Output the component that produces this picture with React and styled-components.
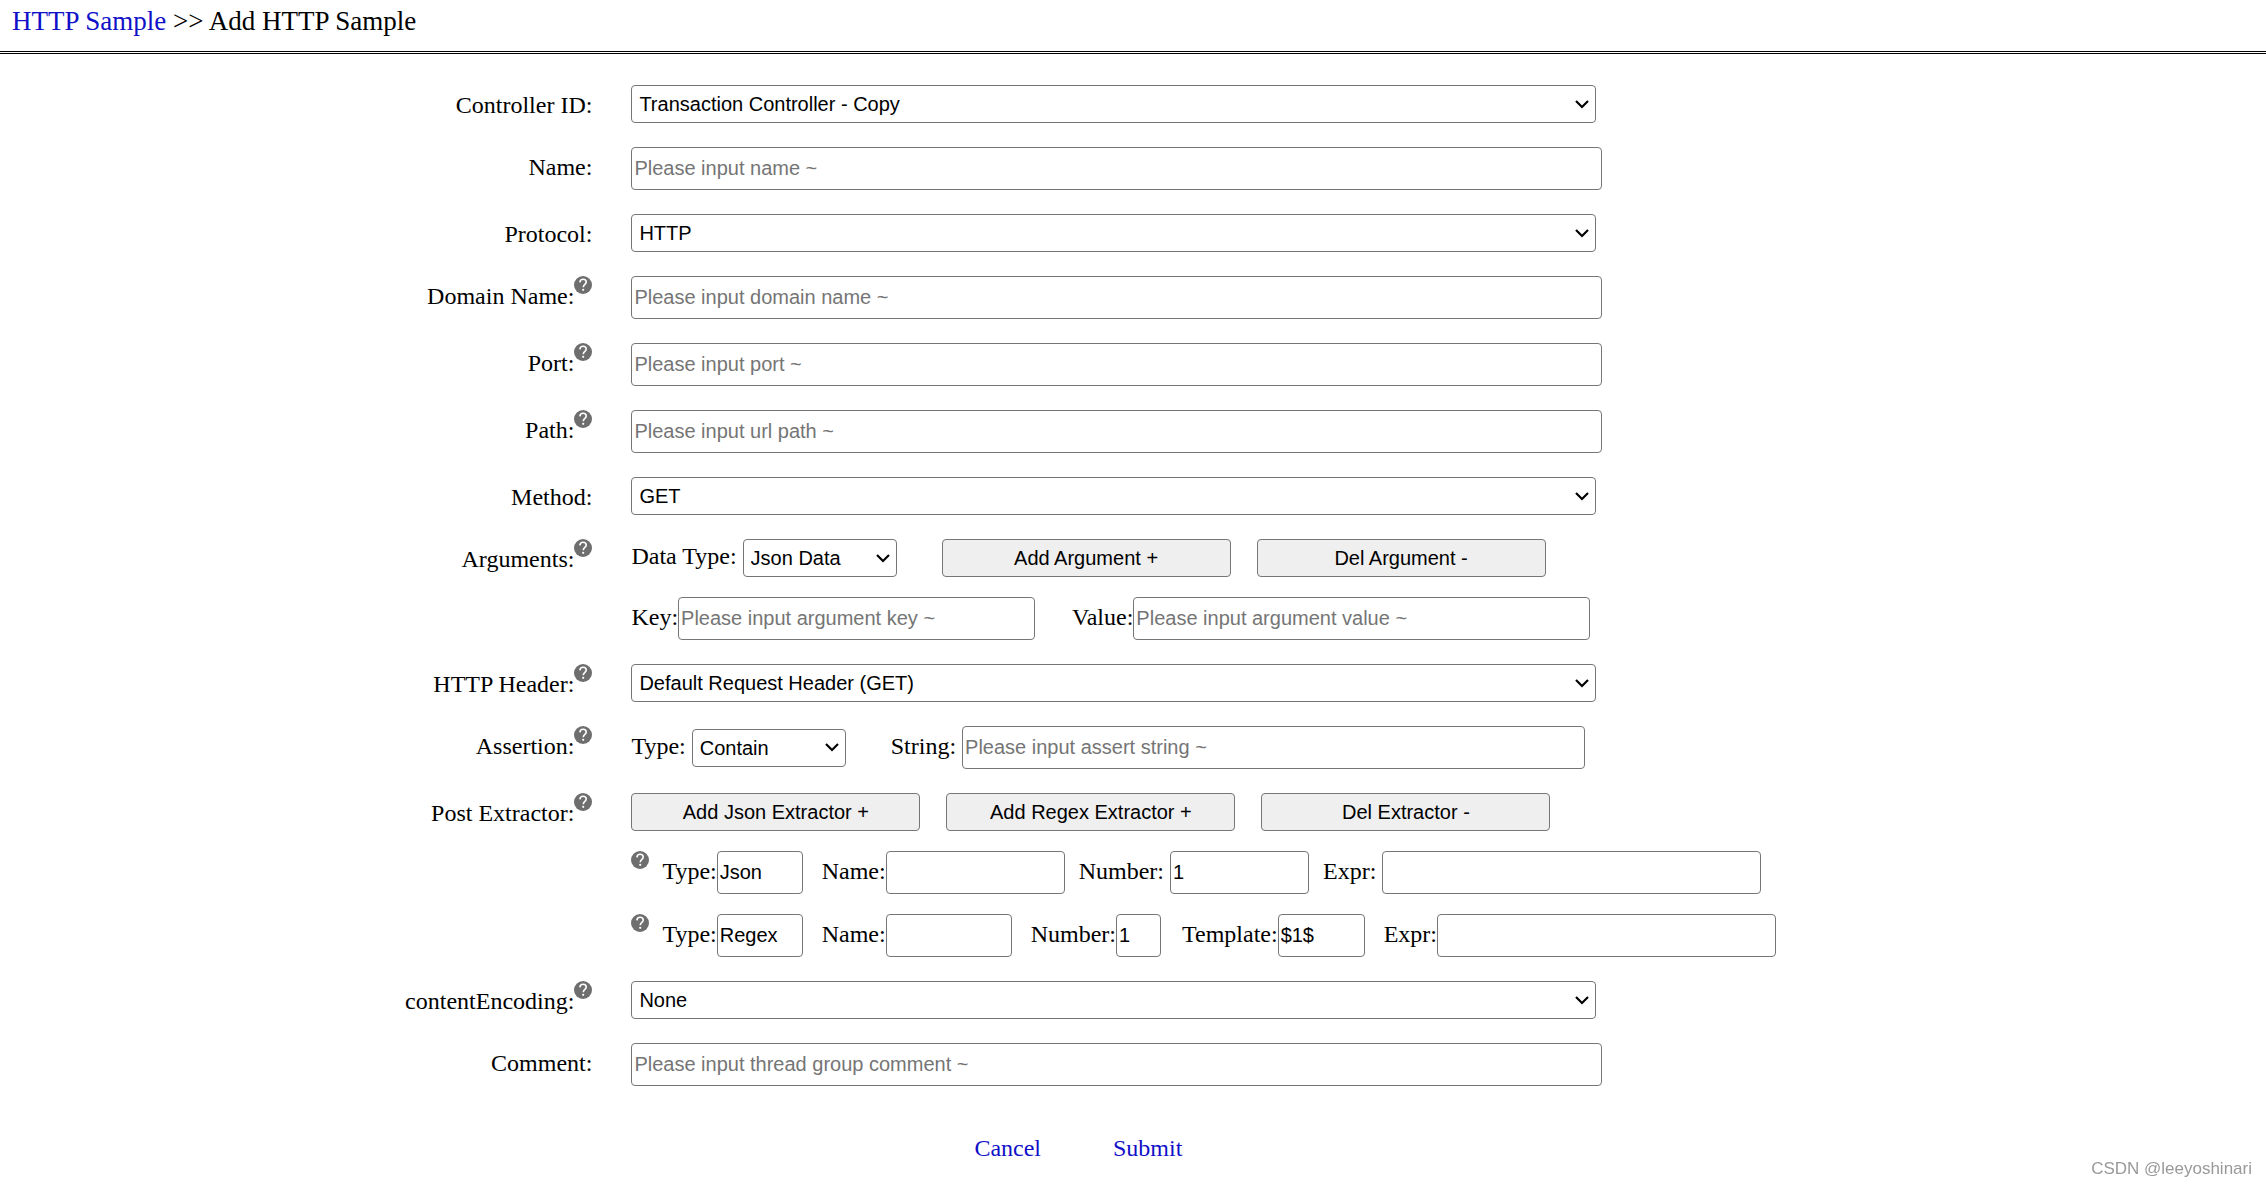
import styled, { createGlobalStyle } from "styled-components";

const GlobalStyle = createGlobalStyle`
  * {
    box-sizing: border-box;
  }
  body {
    margin: 0;
    background-color: white;
    color: black;
    font-family: "Liberation Serif", "Times New Roman", serif;
    font-size: 24px;
  }
`;

const Header = styled.header`
  padding: 6px 12px 14px;
  border-bottom: 3px double black;
  font-size: 27px;
  line-height: 31px;
`;

const Link = styled.a`
  color: #1010c8;
  text-decoration: none;
`;

const Form = styled.form`
  display: flex;
  flex-direction: column;
  gap: 24px;
  padding-top: 31px;
`;

const Row = styled.div`
  display: grid;
  grid-template-columns: 4fr 11fr;
  column-gap: 37px;
  align-items: start;
`;

const LabelCell = styled.div`
  display: flex;
  justify-content: flex-end;
  height: 38px;
  padding-right: 2px;
  line-height: 40px;
`;

const Controls = styled.div`
  display: flex;
  flex-direction: column;
  gap: 20px;
  min-width: 0;
`;

const Line = styled.div`
  display: flex;
  align-items: center;
  min-width: 0;
`;

const Pair = styled.div`
  display: flex;
  align-items: center;
  flex: 0 1 auto;
  min-width: 0;
  gap: ${(props) => (props.$spaced ? "6px" : "0")};
  margin-left: ${(props) => props.$before || 0}px;
`;

const InlineLabel = styled.label`
  padding-bottom: 4px;
  line-height: 28px;
  white-space: nowrap;
`;

const Input = styled.input`
  width: ${(props) => props.$width || "59.4%"};
  min-width: 0;
  height: 43px;
  padding: 0 2px;
  border: 1px solid #767676;
  border-radius: 4px;
  background-color: white;
  color: black;
  font-family: "Liberation Sans", Arial, sans-serif;
  font-size: 20px;
  &::placeholder {
    color: #757575;
    opacity: 1;
  }
`;

const SelectBox = styled.div`
  display: grid;
  align-items: center;
  flex: 0 1 auto;
  width: ${(props) => props.$width || "59%"};
  min-width: 0;
  & > * {
    grid-area: 1 / 1;
  }
`;

const NativeSelect = styled.select`
  appearance: none;
  width: 100%;
  height: 38px;
  padding: 0 28px 0 7px;
  border: 1px solid #767676;
  border-radius: 4px;
  background-color: white;
  color: black;
  font-family: "Liberation Sans", Arial, sans-serif;
  font-size: 20px;
`;

const Arrow = styled.svg`
  justify-self: end;
  width: 14px;
  height: 9px;
  margin-right: 7px;
  pointer-events: none;
`;

const Button = styled.button`
  flex: 0 1 auto;
  width: 289px;
  height: 38px;
  padding: 0 6px;
  border: 1px solid #767676;
  border-radius: 4px;
  background-color: #efefef;
  color: black;
  font-family: "Liberation Sans", Arial, sans-serif;
  font-size: 20px;
  white-space: nowrap;
`;

const ButtonGroup = styled.div`
  display: flex;
  flex: 0 1 auto;
  gap: 26px;
  margin-left: ${(props) => props.$before || 0}px;
`;

const HelpIcon = styled.svg`
  flex: none;
  align-self: flex-start;
  width: 18px;
  height: 18px;
`;

const Actions = styled.div`
  display: flex;
  gap: 72px;
  margin-top: 24px;
  padding-left: 43%;
  line-height: 28px;
`;

const Watermark = styled.div`
  position: fixed;
  right: 14px;
  bottom: 7px;
  color: #999;
  font-family: "Liberation Sans", Arial, sans-serif;
  font-size: 17px;
  line-height: 20px;
`;

const Help = () => (
  <HelpIcon viewBox="0 0 18 18" aria-hidden="true">
    <circle cx="9" cy="9" r="9" fill="#6e6e6e" />
    <path
      d="M5.9 6.4C6 4.400 7.300 3.200 9.100 3.200s3.100 1.100 3.100 2.800c0 1.300-.8 2-1.600 2.700-.9.700-1.300 1.200-1.300 2.600"
      fill="none"
      stroke="white"
      strokeWidth="1.6"
    />
    <circle cx="9.2" cy="13.8" r="1.1" fill="white" />
  </HelpIcon>
);

const Select = ({ id, width, value }) => (
  <SelectBox $width={width}>
    <NativeSelect id={id} defaultValue={value}>
      <option>{value}</option>
    </NativeSelect>
    <Arrow viewBox="0 0 14 9" aria-hidden="true">
      <path d="M1 1l6 6 6-6" fill="none" stroke="black" strokeWidth="2.2" />
    </Arrow>
  </SelectBox>
);

const Field = ({ id, label, help, children }) => (
  <Row>
    <LabelCell>
      {id ? <label htmlFor={id}>{label}</label> : <span>{label}</span>}
      {help && <Help />}
    </LabelCell>
    <Controls>{children}</Controls>
  </Row>
);

const TextPair = ({ id, label, width, before, spaced, ...rest }) => (
  <Pair $before={before} $spaced={spaced}>
    <InlineLabel htmlFor={id}>{label}</InlineLabel>
    <Input id={id} type="text" $width={width} {...rest} />
  </Pair>
);

const App = () => {
  return (
    <>
      <GlobalStyle />
      <Header>
        <Link href="#samples">HTTP Sample</Link> &gt;&gt; Add HTTP Sample
      </Header>
      <Form onSubmit={(e) => e.preventDefault()}>
        <Field id="controller" label="Controller ID:">
          <Select id="controller" value="Transaction Controller - Copy" />
        </Field>
        <Field id="name" label="Name:">
          <Input id="name" placeholder="Please input name ~" />
        </Field>
        <Field id="protocol" label="Protocol:">
          <Select id="protocol" value="HTTP" />
        </Field>
        <Field id="domain" label="Domain Name:" help>
          <Input id="domain" placeholder="Please input domain name ~" />
        </Field>
        <Field id="port" label="Port:" help>
          <Input id="port" placeholder="Please input port ~" />
        </Field>
        <Field id="path" label="Path:" help>
          <Input id="path" placeholder="Please input url path ~" />
        </Field>
        <Field id="method" label="Method:">
          <Select id="method" value="GET" />
        </Field>
        <Field label="Arguments:" help>
          <Line>
            <Pair $spaced>
              <InlineLabel htmlFor="data-type">Data Type:</InlineLabel>
              <Select id="data-type" width="154px" value="Json Data" />
            </Pair>
            <ButtonGroup $before={45}>
              <Button type="button">Add Argument +</Button>
              <Button type="button">Del Argument -</Button>
            </ButtonGroup>
          </Line>
          <Line>
            <TextPair id="arg-key" label="Key:" width="357px" placeholder="Please input argument key ~" />
            <TextPair id="arg-value" label="Value:" width="457px" before={37} placeholder="Please input argument value ~" />
          </Line>
        </Field>
        <Field id="header" label="HTTP Header:" help>
          <Select id="header" value="Default Request Header (GET)" />
        </Field>
        <Field label="Assertion:" help>
          <Line>
            <Pair $spaced>
              <InlineLabel htmlFor="assert-type">Type:</InlineLabel>
              <Select id="assert-type" width="154px" value="Contain" />
            </Pair>
            <TextPair id="assert-string" label="String:" width="623px" before={45} spaced placeholder="Please input assert string ~" />
          </Line>
        </Field>
        <Field label="Post Extractor:" help>
          <Line>
            <ButtonGroup>
              <Button type="button">Add Json Extractor +</Button>
              <Button type="button">Add Regex Extractor +</Button>
              <Button type="button">Del Extractor -</Button>
            </ButtonGroup>
          </Line>
          <Line>
            <Help />
            <TextPair id="json-type" label="Type:" width="86px" before={13} defaultValue="Json" />
            <TextPair id="json-name" label="Name:" width="179px" before={19} />
            <TextPair id="json-number" label="Number:" width="139px" before={14} spaced defaultValue="1" />
            <TextPair id="json-expr" label="Expr:" width="379px" before={14} spaced />
          </Line>
          <Line>
            <Help />
            <TextPair id="regex-type" label="Type:" width="86px" before={13} defaultValue="Regex" />
            <TextPair id="regex-name" label="Name:" width="126px" before={19} />
            <TextPair id="regex-number" label="Number:" width="45px" before={19} defaultValue="1" />
            <TextPair id="regex-template" label="Template:" width="87px" before={21} defaultValue="$1$" />
            <TextPair id="regex-expr" label="Expr:" width="339px" before={19} />
          </Line>
        </Field>
        <Field id="encoding" label="contentEncoding:" help>
          <Select id="encoding" value="None" />
        </Field>
        <Field id="comment" label="Comment:">
          <Input id="comment" placeholder="Please input thread group comment ~" />
        </Field>
        <Actions>
          <Link href="#cancel">Cancel</Link>
          <Link href="#submit">Submit</Link>
        </Actions>
      </Form>
      <Watermark>CSDN @leeyoshinari</Watermark>
    </>
  );
};

export default App;
